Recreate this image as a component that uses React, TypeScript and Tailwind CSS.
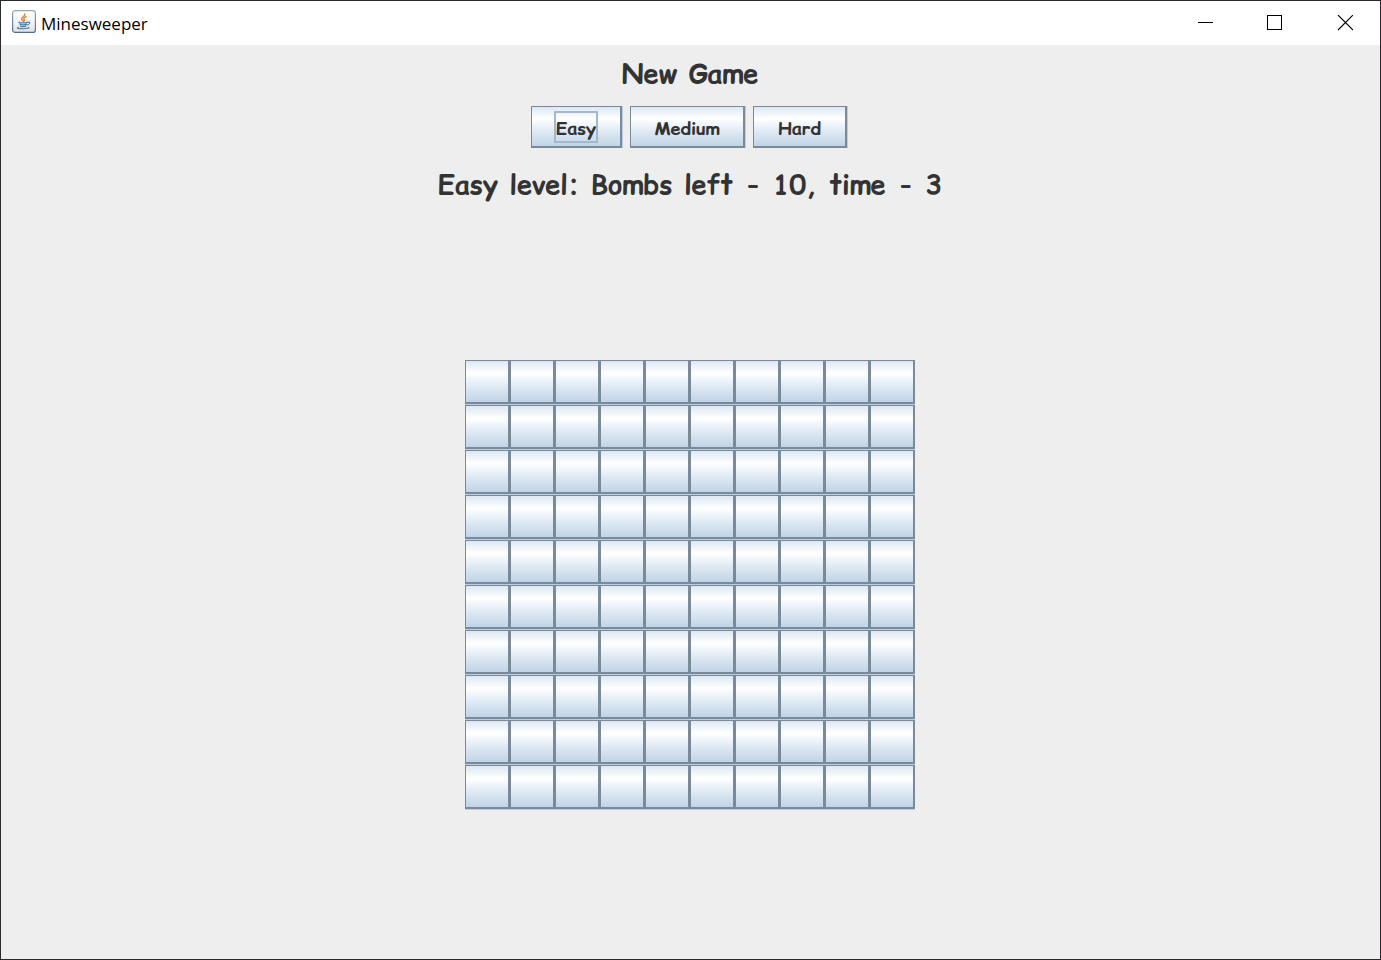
import { useState } from "react";

const SIZE = 10;

const bevel =
  "border-t border-l border-r-2 border-b-2 border-[#7a8a99] bg-[linear-gradient(to_bottom,#dde8f3_0%,#ffffff_30%,#dde8f3_65%,#c0d4e8_100%)]";

const levels = [
  { name: "Easy", width: "w-[91px]" },
  { name: "Medium", width: "w-[115px]" },
  { name: "Hard", width: "w-[94px]" },
];

function JavaIcon() {
  return (
    <svg width="24" height="24" viewBox="0 0 24 24" fill="none" aria-hidden="true">
      <defs>
        <linearGradient id="tile" x1="0" y1="0" x2="0" y2="1">
          <stop offset="0" stopColor="#ffffff" />
          <stop offset="0.5" stopColor="#f4f4f4" />
          <stop offset="1" stopColor="#dfe1e3" />
        </linearGradient>
        <linearGradient id="rim" x1="0" y1="0" x2="0" y2="1">
          <stop offset="0" stopColor="#98a8b4" />
          <stop offset="1" stopColor="#4a7290" />
        </linearGradient>
      </defs>
      <rect x="0.6" y="0.6" width="22.8" height="21.8" rx="2.5" fill="url(#tile)" stroke="url(#rim)" strokeWidth="1.2" />
      <path d="M12.8 4c.9 2.3-3.9 3.1-3.2 5.3.3.9 1.3 1.2 1.6 2M14.2 6.7c-2.2.9-3 1.9-2 3 .6.7.4 1-.3 1.6" stroke="#ee8130" strokeWidth="1.4" strokeLinecap="round" />
      <path d="M7.4 12.1c-2.4.9 6.2 1.1 8 .2M8 14.2c.8.8 5 .8 6.5.1M8.5 16.2c1.2.7 4.2.6 5.3 0" stroke="#4f7fa3" strokeWidth="1.3" strokeLinecap="round" />
      <path d="M15.6 12.3c2.8-1.1 3 1.6-.2 2.8" stroke="#4f7fa3" strokeWidth="1.1" strokeLinecap="round" />
      <path d="M6.4 17.2c-3.3 1 1.4 1.6 4.9 1.6 4 0 7.2-.8 4.8-1.4" stroke="#4f7fa3" strokeWidth="1.1" strokeLinecap="round" />
    </svg>
  );
}

function TitleBar() {
  const control = "flex h-full w-[70px] items-center justify-center hover:bg-gray-200";
  return (
    <header className="flex h-11 items-center bg-white">
      <div className="flex flex-1 items-center gap-[5px] pl-[11px]">
        <div className="pb-0.5">
          <JavaIcon />
        </div>
        <span className="pt-0.5 font-['Open_Sans',sans-serif] text-[17px] leading-6 font-normal text-black">Minesweeper</span>
      </div>
      <button type="button" aria-label="Minimize" className={control}>
        <svg width="16" height="16" viewBox="0 0 16 16">
          <path d="M1 7.5h15" stroke="#000" />
        </svg>
      </button>
      <button type="button" aria-label="Maximize" className={control}>
        <svg width="16" height="16" viewBox="0 0 16 16">
          <rect x="0.5" y="0.5" width="14" height="14" fill="none" stroke="#000" />
        </svg>
      </button>
      <button type="button" aria-label="Close" className={control}>
        <svg width="16" height="16" viewBox="0 0 16 16">
          <path d="M1 0l15 15M16 0L1 15" stroke="#000" strokeWidth="1.1" />
        </svg>
      </button>
    </header>
  );
}

export default function App() {
  const [level, setLevel] = useState("Easy");

  return (
    <div className="flex min-h-screen flex-col border border-[#2b292b] bg-[#eeeeee] font-['Comic_Sans_MS','Comic_Relief','Comic_Neue','Open_Sans',sans-serif] font-bold text-[#333333]">
      <TitleBar />
      <main className="flex flex-1 flex-col items-center pr-px">
        <h1 className="pt-2 text-[27px] leading-[42px]">New Game</h1>
        <div className="flex gap-2 pt-[11px] pr-0.5">
          {levels.map(({ name, width }) => (
            <button
              key={name}
              type="button"
              onClick={() => setLevel(name)}
              className={`flex h-[42px] items-center justify-center text-lg leading-6 shadow-[1px_0_0_#b8cfe5] ${width} ${bevel}`}
            >
              <span className={`border-2 pt-1 ${name === level ? "border-[#a3b8cc]" : "border-transparent"}`}>
                {name}
              </span>
            </button>
          ))}
        </div>
        <p className="pt-4 text-[27px] leading-[42px]">{level} level: Bombs left - 10, time - 3</p>
        <div className="flex flex-1 items-center pt-1">
          <div className="grid grid-cols-10">
            {Array.from({ length: SIZE * SIZE }, (_, i) => (
              <div key={i} className="flex size-[45px] border-b border-[#b8cfe5]">
                <button
                  type="button"
                  aria-label={`Row ${Math.floor(i / SIZE) + 1}, column ${(i % SIZE) + 1}`}
                  className={`flex-1 ${bevel}`}
                />
              </div>
            ))}
          </div>
        </div>
      </main>
    </div>
  );
}
